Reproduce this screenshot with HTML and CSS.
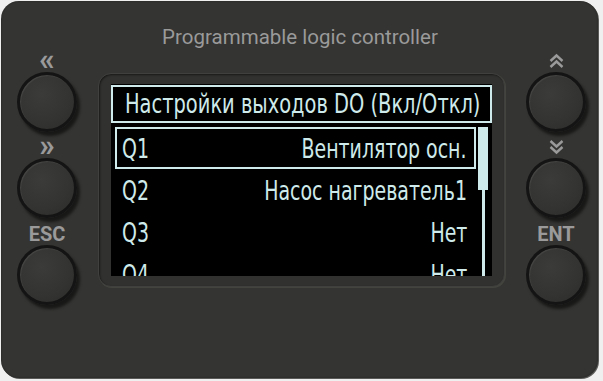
FILE: index.html
```html
<!DOCTYPE html>
<html lang="ru">
<head>
<meta charset="utf-8">
<title>PLC</title>
<link rel="stylesheet" href="styles.css">
</head>
<body>
<div class="device">
  <div class="brand">Programmable logic controller</div>
  <div class="main">
    <div class="col col-left">
      <div class="group g1">
        <div class="label chev">«</div>
        <div class="btn"></div>
      </div>
      <div class="group g2">
        <div class="label chev">»</div>
        <div class="btn"></div>
      </div>
      <div class="group g3">
        <div class="label txt">ESC</div>
        <div class="btn"></div>
      </div>
    </div>
    <div class="bezel">
      <div class="screen">
        <div class="title"><span class="t tl">Настройки выходов DO (Вкл/Откл)</span></div>
        <div class="body">
          <div class="list">
            <div class="row sel"><span class="t l">Q1</span><span class="t r">Вентилятор осн.</span></div>
            <div class="row"><span class="t l">Q2</span><span class="t r">Насос нагреватель1</span></div>
            <div class="row"><span class="t l">Q3</span><span class="t r">Нет</span></div>
            <div class="row"><span class="t l">Q4</span><span class="t r">Нет</span></div>
          </div>
          <div class="scroll"><div class="thumb"></div></div>
        </div>
      </div>
    </div>
    <div class="col col-right">
      <div class="group g1">
        <div class="label icon"><svg width="17" height="16" viewBox="0 0 17 16"><path d="M2.5 8 L8.5 2.5 L14.5 8 M2.5 14 L8.5 8.5 L14.5 14" fill="none" stroke="#9a9a9a" stroke-width="2.4"/></svg></div>
        <div class="btn"></div>
      </div>
      <div class="group g2">
        <div class="label icon"><svg width="17" height="16" viewBox="0 0 17 16"><path d="M2.5 2 L8.5 7.5 L14.5 2 M2.5 8 L8.5 13.5 L14.5 8" fill="none" stroke="#9a9a9a" stroke-width="2.4"/></svg></div>
        <div class="btn"></div>
      </div>
      <div class="group g3">
        <div class="label txt">ENT</div>
        <div class="btn"></div>
      </div>
    </div>
  </div>
</div>
</body>
</html>
```

FILE: styles.css
```css
html, body {
  margin: 0;
  padding: 0;
  background: #efefef;
}
body {
  width: 603px;
  height: 381px;
  overflow: hidden;
}
.device {
  margin: 1px 0 0 1px;
  width: 597px;
  height: 377px;
  box-sizing: border-box;
  border-radius: 18px;
  background: #343432;
  box-shadow: 1px 1px 0 #5a5a58, inset 0 0 2px rgba(0,0,0,0.4);
  display: flex;
  flex-direction: column;
}
.brand {
  font-family: Roboto, "Liberation Sans", sans-serif;
  font-size: 20.5px;
  color: #9a9a9a;
  text-align: center;
  padding-top: 25px;
  height: 46px;
  box-sizing: border-box;
  line-height: 22px;
  margin-left: 1px;
}
.main {
  display: flex;
  align-items: flex-start;
}
.col {
  flex-shrink: 0;
  width: 92px;
  display: flex;
  flex-direction: column;
  align-items: center;
}
.col-right {
  width: 90px;
  margin-left: 6px;
}
.group {
  display: flex;
  flex-direction: column;
  align-items: center;
}
.label {
  height: 20px;
  display: flex;
  align-items: center;
  justify-content: center;
  color: #9a9a9a;
  font-family: Roboto, "Liberation Sans", sans-serif;
  font-weight: bold;
}
.chev {
  font-size: 31px;
  line-height: 20px;
  padding-bottom: 3px;
  box-sizing: border-box;
}
.txt {
  font-size: 20px;
}
.g1 { margin-top: 4px; }
.g2 { margin-top: 5px; }
.g3 { margin-top: 6px; }
.btn {
  margin-top: 1px;
  width: 60px;
  height: 60px;
  box-sizing: border-box;
  border-radius: 50%;
  border: 3px solid #141414;
  background: radial-gradient(circle at 40% 35%, #3b3b39 0%, #333331 60%, #2b2b29 100%);
  box-shadow: 3px 4px 3px rgba(0,0,0,0.55), inset 1px 1px 1px rgba(255,255,255,0.08);
}
.bezel {
  flex-shrink: 0;
  margin-left: 5px;
  margin-top: 26px;
  width: 407px;
  height: 214px;
  box-sizing: border-box;
  border-radius: 13px;
  border: 1px solid #40403e;
  background: #31312f;
  box-shadow: inset 1px 1px 2px rgba(0,0,0,0.5), 1px 1px 0 #44443f;
  padding: 10px 0 0 12px;
}
.screen {
  width: 381px;
  height: 192px;
  background: #000;
  overflow: hidden;
  color: #cfeaea;
  font-family: "DejaVu Sans Condensed", "DejaVu Sans", sans-serif;
}
.t {
  display: inline-block;
  white-space: nowrap;
}
.t.l, .t.tl { transform-origin: left center; }
.t.r { transform-origin: right center; }
.title {
  margin-top: 1px;
  height: 38px;
  box-sizing: border-box;
  border: 2px solid #cfeaea;
  font-size: 27px;
  line-height: 33px;
  padding-left: 12px;
  white-space: nowrap;
  overflow: hidden;
}
.tl { transform: scaleX(0.8); }
.body {
  display: flex;
  margin-top: 4px;
}
.list {
  margin-left: 4px;
  width: 361px;
}
.row {
  height: 42px;
  box-sizing: border-box;
  display: flex;
  justify-content: space-between;
  align-items: center;
  font-size: 27px;
  padding: 0 7px 0 5px;
  border: 2px solid transparent;
}
.row .t { transform: scaleX(0.78); }
.row.sel {
  border-color: #cfeaea;
}
.scroll {
  margin-left: 2px;
  width: 10px;
  height: 160px;
  position: relative;
  display: flex;
  flex-direction: column;
  align-items: center;
}
.scroll::before {
  content: "";
  width: 3px;
  height: 160px;
  background: #cfeaea;
}
.thumb {
  position: absolute;
  top: 0;
  left: 0;
  width: 10px;
  height: 63px;
  background: #cfeaea;
}
```
